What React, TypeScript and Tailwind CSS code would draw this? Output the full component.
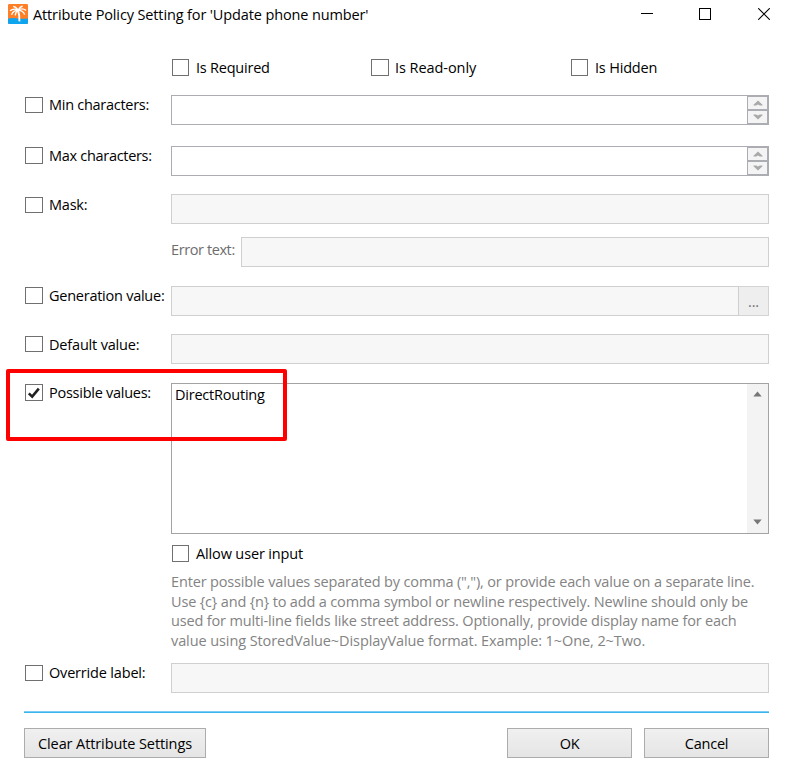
import React, { useState } from "react";

const CheckMark: React.FC = () => (
  <svg width="14" height="12" viewBox="0 0 14 12" fill="none">
    <path d="M1.8 6.4 L5.2 9.6 L11.8 1.6" stroke="#212121" strokeWidth="2.6" />
  </svg>
);

const CheckField: React.FC<{
  label: string;
  checked?: boolean;
  boxClass?: string;
  textClass?: string;
}> = ({ label, checked = false, boxClass = "w-[18px] h-4", textClass = "ml-1.5" }) => {
  const [on, setOn] = useState(checked);

  return (
    <button
      type="button"
      role="checkbox"
      aria-checked={on}
      onClick={() => setOn(!on)}
      className="flex items-start h-[17px] whitespace-nowrap"
    >
      <span
        className={`flex shrink-0 items-center justify-center border border-[#707070] bg-white ${boxClass}`}
      >
        {on && <CheckMark />}
      </span>
      <span className={textClass}>{label}</span>
    </button>
  );
};

// Labelled line of the form, the label sits in the fixed left column
const Row: React.FC<{
  label?: React.ReactNode;
  className?: string;
  children: React.ReactNode;
}> = ({ label, className = "", children }) => (
  <div className={`flex items-start ${className}`}>
    <div className="w-[147px] shrink-0 pl-px">{label}</div>
    <div className="flex-1 min-w-0">{children}</div>
  </div>
);

const DisabledInput: React.FC = () => (
  <div className="h-[30px] w-full border border-[#cfcfcf] bg-[#f7f7f7]" />
);

const SpinInput: React.FC = () => (
  <div className="flex h-[30px] w-full border border-[#abadb3] bg-white">
    <div className="flex-1" />
    <div className="flex w-[21px] flex-col">
      <div className="flex h-3.5 items-center justify-center border border-[#abadb3] bg-[#f4f4f4]">
        <svg width="10" height="6" viewBox="0 0 10 6">
          <path d="M0.5 5.5 V4.8 L5 0.4 L9.5 4.8 V5.5 H6.8 L5 4.5 L3.2 5.5Z" fill="#a9a9a9" />
        </svg>
      </div>
      <div className="flex h-3.5 items-center justify-center border border-[#abadb3] bg-[#f4f4f4]">
        <svg width="10" height="6" viewBox="0 0 10 6">
          <path d="M0.5 0.5 H3.2 L5 1.5 L6.8 0.5 H9.5 V1.2 L5 5.6 L0.5 1.2Z" fill="#a9a9a9" />
        </svg>
      </div>
    </div>
  </div>
);

const PalmIcon: React.FC = () => (
  <svg width="20" height="20" viewBox="0 0 20 20">
    <rect width="20" height="20" rx="1.2" fill="#ff7f27" />
    <path d="M0 14.6 Q5 13.6 10 14.4 T20 14.6 V18.8 Q20 20 18.8 20 H1.2 Q0 20 0 18.8Z" fill="#0fa4ee" />
    <path d="M10 6.4 Q11.8 11.5 11.4 17.4" stroke="#fff" strokeWidth="1.9" fill="none" />
    <path
      d="M10 6.4 Q6 3.6 2 6.8 M10 6.4 Q5.2 6.2 3.6 10.8 M10 6.4 Q7.4 8 7.2 11.4 M10 6.4 Q14 3.4 18 6.4 M10 6.4 Q15.2 6.2 16.6 10.6 M10 6.4 Q8.6 3 5.2 2.4 M10 6.4 Q11.4 3 14.6 2"
      stroke="#fff"
      strokeWidth="1.4"
      fill="none"
    />
  </svg>
);

const TitleBar: React.FC = () => (
  <header className="flex h-7 items-center pl-2">
    <PalmIcon />
    <h1 className="ml-[5px] tracking-[-0.13px]">Attribute Policy Setting for 'Update phone number'</h1>
    <div className="ml-auto mr-4 flex items-center">
      <svg className="mr-[46px]" width="12" height="12" viewBox="0 0 12 12" shapeRendering="crispEdges">
        <path d="M0 5.5H12" stroke="#000" />
      </svg>
      <svg className="mr-[47px]" width="12" height="12" viewBox="0 0 12 12" shapeRendering="crispEdges">
        <rect x="0.5" y="0.5" width="11" height="11" fill="none" stroke="#000" />
      </svg>
      <svg width="12" height="12" viewBox="0 0 12 12">
        <path d="M0.2 0.2L11.8 11.8M11.8 0.2L0.2 11.8" stroke="#000" strokeWidth="1.1" />
      </svg>
    </div>
  </header>
);

const DialogButton: React.FC<{ className: string; children: React.ReactNode }> = ({ className, children }) => (
  <button
    type="button"
    className={`h-[30px] border border-[#acacac] bg-linear-to-b from-[#f0f0f0] to-[#e5e5e5] pt-0.5 ${className}`}
  >
    {children}
  </button>
);

const App: React.FC = () => {
  return (
    <div className="relative h-[781px] w-[786px] overflow-hidden bg-white font-['Open_Sans',sans-serif] text-[14.5px] leading-[17px] tracking-[-0.22px] text-black">
      <TitleBar />

      <main className="pl-6 pr-[17px]">
        {/* Flags */}
        <div className="mt-[31px] flex pl-[148px]">
          <div className="w-[199px]">
            <CheckField label="Is Required" boxClass="size-[17px]" textClass="ml-[7px]" />
          </div>
          <div className="w-[200px]">
            <CheckField label="Is Read-only" boxClass="w-[18px] h-[17px]" textClass="ml-1.5 tracking-[-0.06px]" />
          </div>
          <CheckField label="Is Hidden" boxClass="size-[17px]" textClass="ml-[7px] tracking-[-0.18px]" />
        </div>

        <Row className="mt-[19px]" label={<div className="mt-0.5"><CheckField label="Min characters:" textClass="ml-1.5 -mt-px tracking-[-0.28px]" /></div>}>
          <SpinInput />
        </Row>
        <Row
          className="mt-[21px]"
          label={<div className="mt-px"><CheckField label="Max characters:" boxClass="w-[18px] h-[17px]" textClass="ml-1.5 tracking-[-0.3px]" /></div>}
        >
          <SpinInput />
        </Row>
        <Row className="mt-[18px]" label={<div className="mt-[3px]"><CheckField label="Mask:" textClass="ml-1.5 -mt-px" /></div>}>
          <DisabledInput />
        </Row>
        <Row className="mt-[13px]">
          <div className="flex">
            <span className="w-[70px] shrink-0 pt-1 tracking-[-0.4px] text-[#6d6d6d]">Error text:</span>
            <DisabledInput />
          </div>
        </Row>
        <Row
          className="mt-[19px]"
          label={<div className="mt-px"><CheckField label="Generation value:" boxClass="w-[18px] h-[17px]" textClass="ml-1.5 tracking-[-0.25px]" /></div>}
        >
          <div className="flex">
            <DisabledInput />
            <button
              type="button"
              className="h-[30px] w-[30px] shrink-0 border border-l-0 border-[#d4d4d4] bg-[#eeeeee] text-[#707070]"
            >
              ...
            </button>
          </div>
        </Row>
        <Row className="mt-[18px]" label={<div className="mt-0.5"><CheckField label="Default value:" textClass="ml-1.5 tracking-[-0.18px]" /></div>}>
          <DisabledInput />
        </Row>

        {/* Possible values */}
        <Row
          className="mt-[19px]"
          label={<div className="mt-px"><CheckField label="Possible values:" checked boxClass="w-[18px] h-[17px]" textClass="ml-1.5 tracking-[-0.26px]" /></div>}
        >
          <div className="flex h-[151px] border border-[#a3a3a3] bg-white">
            <div className="flex-1 pl-[3px] pt-0.5">DirectRouting</div>
            <div className="flex w-[21px] flex-col items-center justify-between bg-[#f3f3f3] pb-2 pt-[7px]">
              <svg width="9" height="6" viewBox="0 0 9 6">
                <path d="M0.3 5.4L4.5 0.6L8.7 5.4Z" fill="#777" />
              </svg>
              <svg width="9" height="6" viewBox="0 0 9 6">
                <path d="M0.3 0.6H8.7L4.5 5.4Z" fill="#777" />
              </svg>
            </div>
          </div>
          <div className="mt-[11px] pl-px">
            <CheckField label="Allow user input" boxClass="size-[17px]" textClass="ml-[7px] tracking-[-0.14px]" />
          </div>
          <p className="mt-2.5 whitespace-nowrap leading-[19.7px] tracking-[-0.155px] text-[#838383]">
            Enter possible values separated by comma (","), or provide each value on a separate line.
            <br />
            Use {"{c}"} and {"{n}"} to add a comma symbol or newline respectively. Newline should only be
            <br />
            used for multi-line fields like street address. Optionally, provide display name for each
            <br />
            <span className="tracking-[-0.09px]">value using StoredValue~DisplayValue format. Example: 1~One, 2~Two.</span>
          </p>
        </Row>

        <Row className="mt-3" label={<div className="mt-0.5"><CheckField label="Override label:" textClass="ml-1.5 -mt-px tracking-[-0.18px]" /></div>}>
          <DisabledInput />
        </Row>
      </main>

      <footer className="mt-[18px] pl-6 pr-[17px]">
        <div className="h-0.5 border-t border-[#7ccdf3] bg-[#38b6ee]" />
        <div className="mt-[15px] flex">
          <DialogButton className="w-[182px] tracking-[-0.1px]">Clear Attribute Settings</DialogButton>
          <DialogButton className="ml-auto w-[125px]">OK</DialogButton>
          <DialogButton className="ml-3 w-[125px]">Cancel</DialogButton>
        </div>
      </footer>

      {/* Highlight drawn over the possible values row */}
      <div className="pointer-events-none absolute left-[6px] top-[368.5px] h-[72px] w-[280.5px] rounded-[2px] border-4 border-[#fe0000]" />
    </div>
  );
};

export default App;
